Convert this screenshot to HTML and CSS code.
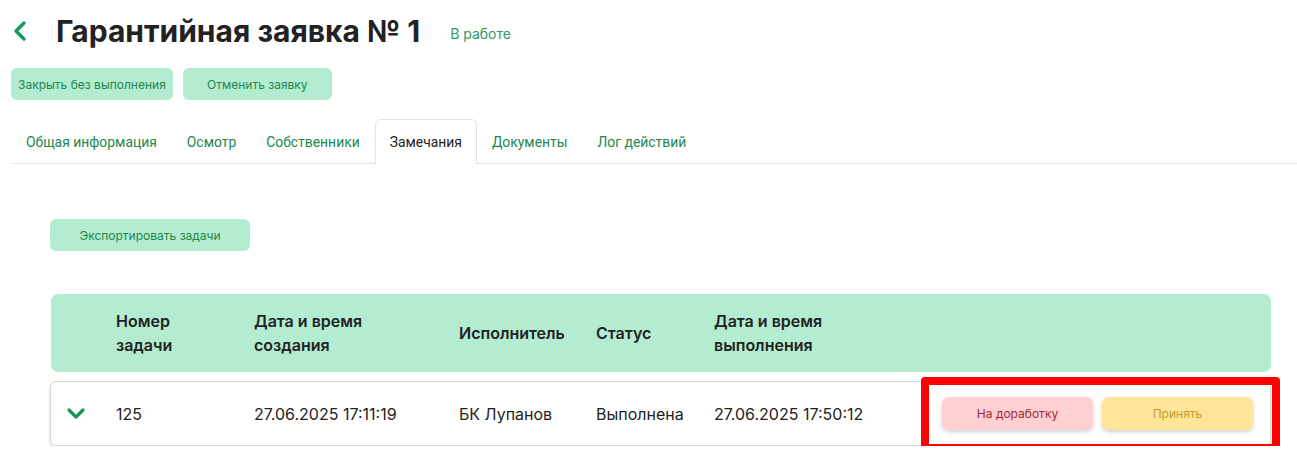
FILE: index.html
```html
<!DOCTYPE html>
<html lang="ru">
<head>
  <meta charset="UTF-8">
  <meta name="viewport" content="width=device-width, initial-scale=1.0">
  <title>Гарантийная заявка № 1</title>
  <link rel="stylesheet" href="styles.css">
</head>
<body>
  <div class="page-head">
    <a class="back" href="#">
      <svg width="16" height="22" viewBox="0 0 16 22"><path d="M12 3 L4 11 L12 19" fill="none" stroke="#17985a" stroke-width="3.4" stroke-linecap="round" stroke-linejoin="round"/></svg>
    </a>
    <h1>Гарантийная заявка № 1</h1>
    <span class="state">В работе</span>
  </div>

  <div class="actions">
    <button class="btn">Закрыть без выполнения</button>
    <button class="btn btn-wide">Отменить заявку</button>
  </div>

  <div class="tabs">
    <button class="tablink">Общая информация</button>
    <button class="tablink">Осмотр</button>
    <button class="tablink">Собственники</button>
    <button class="tablink active">Замечания</button>
    <button class="tablink">Документы</button>
    <button class="tablink">Лог действий</button>
  </div>

  <div class="tab-body">
    <button class="btn btn-export">Экспортировать задачи</button>

    <div class="grid-head">
      <div></div>
      <div>Номер<br>задачи</div>
      <div>Дата и время<br>создания</div>
      <div>Исполнитель</div>
      <div>Статус</div>
      <div>Дата и время<br>выполнения</div>
      <div></div>
    </div>

    <div class="grid-row">
      <div class="toggle">
        <svg width="20" height="14" viewBox="0 0 20 14"><path d="M3 3 L10 10 L17 3" fill="none" stroke="#17985a" stroke-width="3.2" stroke-linecap="round" stroke-linejoin="round"/></svg>
      </div>
      <div>125</div>
      <div>27.06.2025 17:11:19</div>
      <div>БК Лупанов</div>
      <div>Выполнена</div>
      <div>27.06.2025 17:50:12</div>
      <div class="row-actions">
        <button class="btn-rework">На доработку</button>
        <button class="btn-accept">Принять</button>
        <span class="highlight"></span>
      </div>
    </div>
  </div>
</body>
</html>
```

FILE: styles.css
```css
body {
  margin: 0;
  padding: 0 0 0 11px;
  font-family: Inter, "Noto Sans", sans-serif;
  color: #222;
  background: #fff;
}
.page-head {
  display: flex;
  align-items: center;
  height: 62px;
}
.back {
  display: flex;
  margin-left: 1px;
  width: 44px;
}
h1 {
  margin: 0;
  font-size: 30px;
  font-weight: 700;
  color: #222;
}
.state {
  margin-left: 30px;
  margin-top: 4px;
  font-size: 14px;
  color: #2c9a5f;
}
.actions {
  display: flex;
  gap: 10px;
  margin-top: 6px;
}
.btn {
  background-color: #b3ecd0;
  border: none;
  color: #23874f;
  font-family: Inter, "Noto Sans", sans-serif;
  font-size: 12px;
  height: 32px;
  padding: 0 7px;
  border-radius: 6px;
  cursor: pointer;
}
.btn-wide {
  width: 149px;
}
.tabs {
  display: flex;
  margin-top: 19px;
  border-bottom: 1px solid #e2e2e2;
  height: 44px;
}
.tablink {
  font-family: Roboto, sans-serif;
  font-size: 13.9px;
  color: #23874f;
  background: none;
  border: 1px solid transparent;
  border-bottom: none;
  padding: 0 14px;
  height: 45px;
  border-radius: 6px 6px 0 0;
  cursor: pointer;
}
.tablink.active {
  color: #222;
  background: #fff;
  border-color: #e2e2e2;
}
.tab-body {
  padding: 55px 26px 0 39px;
}
.btn-export {
  width: 200px;
}
.grid-head,
.grid-row {
  display: grid;
  grid-template-columns: 65px 138px 205px 137px 118px 207px 1fr;
  align-items: center;
  font-size: 16px;
}
.grid-head {
  margin-top: 43px;
  margin-left: 1px;
  height: 78px;
  background: #b3ecd0;
  border-radius: 7px;
  font-weight: 600;
  line-height: 24px;
  color: #222;
}
.grid-row {
  margin-top: 9px;
  height: 63px;
  border: 1px solid #d8d8d8;
  border-radius: 6px;
  box-shadow: 0 2px 3px rgba(0, 0, 0, 0.18);
  color: #222;
}
.toggle {
  display: flex;
  padding-left: 15px;
}
.row-actions {
  position: relative;
  display: flex;
  gap: 9px;
  padding-left: 21px;
}
.row-actions button {
  font-family: Inter, "Noto Sans", sans-serif;
  font-size: 12px;
  width: 151px;
  height: 33px;
  border: none;
  border-radius: 7px;
  box-shadow: 0 2px 4px rgba(0, 0, 0, 0.18);
  cursor: pointer;
}
.btn-rework {
  background: #ffd0d2;
  color: #9b2a35;
}
.btn-accept {
  background: #ffe597;
  color: #c49a27;
}
.highlight {
  position: absolute;
  left: 0;
  top: -20px;
  width: 359px;
  height: 75px;
  box-sizing: border-box;
  border: 8px solid #ff0000;
  border-radius: 4px;
  pointer-events: none;
}
```
